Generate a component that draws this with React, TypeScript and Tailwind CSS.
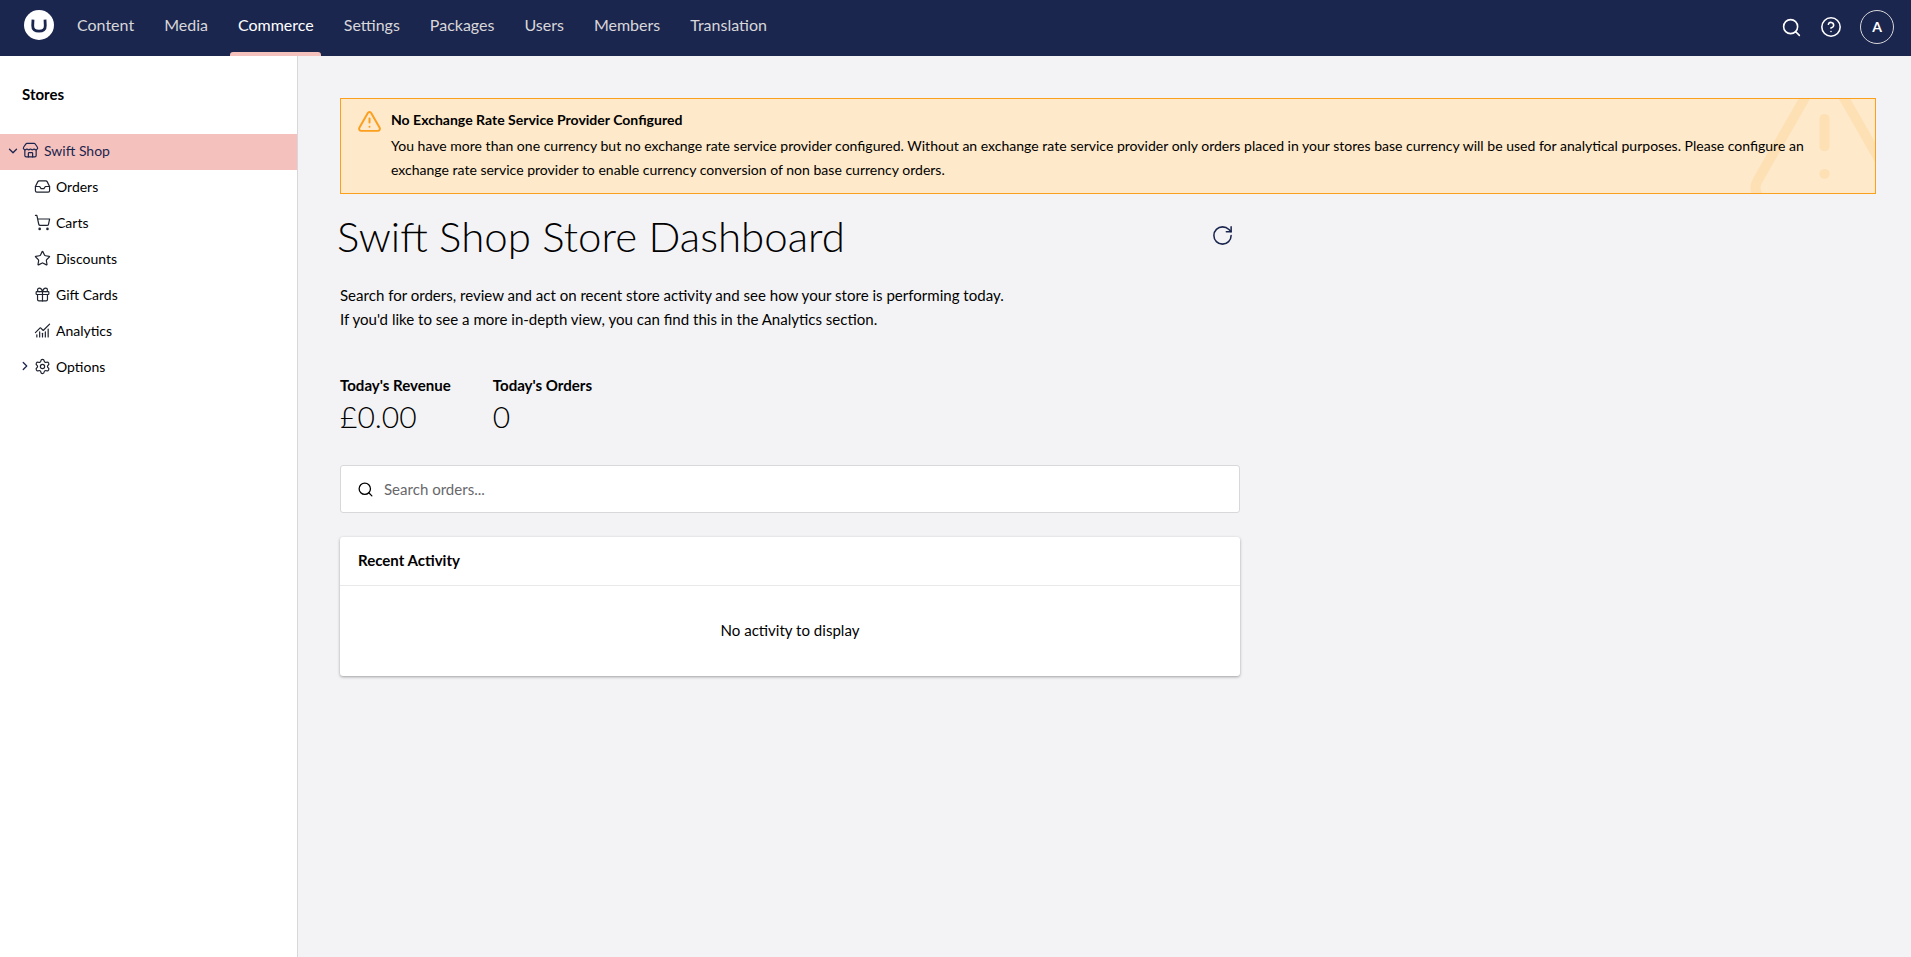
import { ChevronDown, ChevronRight, CircleHelp, RotateCw, Search, ShoppingCart, Star, Gift, Settings, Store, Inbox, ChartNoAxesCombined, TriangleAlert } from "lucide-react";
import type { ComponentType } from "react";

const navItems = ["Content", "Media", "Commerce", "Settings", "Packages", "Users", "Members", "Translation"];

const treeItems: { label: string; icon: ComponentType<{ className?: string; strokeWidth?: number }>; caret?: boolean }[] = [
  { label: "Orders", icon: Inbox },
  { label: "Carts", icon: ShoppingCart },
  { label: "Discounts", icon: Star },
  { label: "Gift Cards", icon: Gift },
  { label: "Analytics", icon: ChartNoAxesCombined },
  { label: "Options", icon: Settings, caret: true },
];

function Logo() {
  return (
    <svg viewBox="0 0 32 32" className="mb-[6px] h-[30px] w-[30px]">
      <circle cx="16" cy="16" r="16" fill="#fff" />
      <path d="M9.6 10.2 9.3 16.5c-.2 4.3 2.4 6 6.7 6s6.9-1.7 6.7-6l-.3-6.3" fill="none" stroke="#1b264f" strokeWidth="3" />
    </svg>
  );
}

function Header() {
  return (
    <header className="flex h-14 items-center bg-[#1b264f] pl-6 pr-[17px]">
      <Logo />
      <nav className="ml-2 flex h-full">
        {navItems.map((item) => (
          <div
            key={item}
            className={
              item === "Commerce"
                ? "relative mx-[7.5px] flex items-center px-[7.5px] pb-[6px] text-[16px] text-white"
                : "relative mx-[7.5px] flex items-center px-[7.5px] pb-[6px] text-[16px] text-[#d8d7d9]"
            }
          >
            {item}
            {item === "Commerce" && <span className="absolute inset-x-0 bottom-0 h-1 rounded-t-[3px] bg-[#f5c1bc]" />}
          </div>
        ))}
      </nav>
      <div className="ml-auto -mt-[2px] flex items-center gap-[18px] text-white">
        <Search className="h-[21px] w-[21px]" strokeWidth={1.8} />
        <CircleHelp className="h-[22px] w-[22px]" strokeWidth={1.7} />
        <div className="flex h-[34px] w-[34px] items-center justify-center rounded-full border border-[#d8d7d9] pb-[2px] text-[14px] font-bold">A</div>
      </div>
    </header>
  );
}

function Sidebar() {
  return (
    <aside className="w-[298px] shrink-0 border-r border-[#d8d7d9] bg-white">
      <h3 className="pl-[22px] pt-[28px] text-[15px] leading-5 font-bold text-black">Stores</h3>
      <div className="mt-[30px] flex h-9 items-center bg-[#f5c1bc] pb-[3px] pl-[6px] text-[14px] text-[#1b264f]">
        <ChevronDown className="h-3.5 w-3.5" strokeWidth={2.2} />
        <Store className="ml-[2px] h-[17px] w-[17px]" strokeWidth={1.7} />
        <span className="ml-[5px]">Swift Shop</span>
      </div>
      {treeItems.map(({ label, icon: Icon, caret }) => (
        <div key={label} className="relative flex h-9 items-center pb-[3px] pl-[34px] text-[14px] text-black">
          {caret && <ChevronRight className="absolute left-[18px] top-[9px] h-3.5 w-3.5 text-[#1b264f]" strokeWidth={2.2} />}
          <Icon className="h-[17px] w-[17px] text-[#1f2430]" strokeWidth={1.7} />
          <span className="ml-[5px]">{label}</span>
        </div>
      ))}
    </aside>
  );
}

function Alert() {
  return (
    <div className="relative h-24 overflow-hidden border border-[#fb9f1f] bg-[#fee9ca] pl-[50px] pt-[9px] text-[14.04px] leading-6 text-black">
      <TriangleAlert className="absolute left-[16px] top-[10px] h-[25px] w-[25px] text-[#fb9f1f]" strokeWidth={1.9} />
      <TriangleAlert className="absolute -right-[32px] -top-[42px] h-[165px] w-[165px] text-[#fee0b5]" strokeWidth={1.45} />
      <div className="relative">
        <strong className="font-bold">No Exchange Rate Service Provider Configured</strong>
        <p className="mt-[2px] pr-[60px]">
          You have more than one currency but no exchange rate service provider configured. Without an exchange rate service provider only orders placed in your stores base currency will be used for analytical purposes. Please configure an exchange rate service provider to enable currency conversion of non base currency orders.
        </p>
      </div>
    </div>
  );
}

export default function App() {
  return (
    <div className="flex min-h-[957px] flex-col bg-[#f3f3f5] font-['Lato',sans-serif]">
      <Header />
      <div className="flex flex-1">
        <Sidebar />
        <main className="flex-1 pl-[42px] pr-[35px] pt-[42px] text-[15.05px] text-black">
          <Alert />
          <div className="w-[900px]">
            <div className="mt-[19px] flex items-center justify-between pr-[6px]">
              <h1 className="-ml-[3px] text-[42px] leading-[46px] font-light">Swift Shop Store Dashboard</h1>
              <RotateCw className="mb-[2px] h-[23px] w-[23px] text-[#1b264f]" strokeWidth={1.6} />
            </div>
            <p className="mt-[24px] leading-6">
              Search for orders, review and act on recent store activity and see how your store is performing today.
              <br />
              If you'd like to see a more in-depth view, you can find this in the Analytics section.
            </p>
            <div className="mt-[44px] flex gap-[42px]">
              <div>
                <div className="leading-5 font-bold">Today's Revenue</div>
                <div className="mt-px text-[30px] leading-[40px] font-light">£0.00</div>
              </div>
              <div>
                <div className="leading-5 font-bold">Today's Orders</div>
                <div className="mt-px text-[30px] leading-[40px] font-light">0</div>
              </div>
            </div>
            <div className="mt-[29px] flex h-12 items-center rounded-[3px] border border-[#d8d7d9] bg-white pl-[16px]">
              <Search className="h-[17px] w-[17px]" strokeWidth={1.8} />
              <span className="ml-[10px] text-[#68676b]">Search orders...</span>
            </div>
            <section className="mt-6 rounded-[3px] bg-white shadow-[0_1px_3px_rgba(0,0,0,0.35)]">
              <h3 className="flex h-[49px] items-center border-b border-[#e9e9eb] pb-[2px] pl-[18px] font-bold">Recent Activity</h3>
              <div className="flex h-[90px] items-center justify-center pb-[2px]">No activity to display</div>
            </section>
          </div>
        </main>
      </div>
    </div>
  );
}
